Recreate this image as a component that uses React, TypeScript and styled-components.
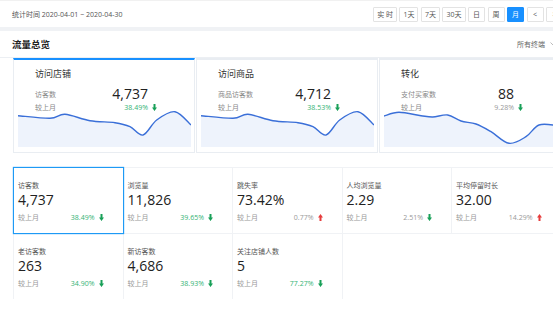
import React from 'react'
import styled, { createGlobalStyle } from 'styled-components'

const GlobalStyle = createGlobalStyle`
    html, body {
        margin: 0;
        padding: 0;
        background: #fff;
        overflow: hidden;
    }
    body {
        font-family: "Open Sans", "Noto Sans CJK SC", sans-serif;
        color: #333;
    }
`

const Page = styled.div`
    width: 574px;
`

const TopBar = styled.div`
    height: 27px;
    box-sizing: border-box;
    display: flex;
    align-items: center;
    justify-content: space-between;
    padding: 0 11px 0 12px;
    border-top: 1px solid #f1f1f1;
`

const DateText = styled.span`
    font-size: 7px;
    color: #555;
`

const BtnGroup = styled.div`
    display: flex;
    gap: 2.5px;
`

const RangeBtn = styled.div<{ $active?: boolean }>`
    height: 15px;
    min-width: 17px;
    box-sizing: border-box;
    padding: 0 3px;
    display: flex;
    align-items: center;
    justify-content: center;
    font-size: 7px;
    border: 1px solid ${(p) => (p.$active ? '#1890ff' : '#e3e3e3')};
    background: ${(p) => (p.$active ? '#1890ff' : '#fff')};
    color: ${(p) => (p.$active ? '#fff' : '#555')};
    border-radius: 1px;
`

const Band = styled.div`
    height: 4px;
    background: #f0f2f5;
`

const SectionHead = styled.div`
    height: 27px;
    box-sizing: border-box;
    display: flex;
    align-items: center;
    justify-content: space-between;
    padding: 0 18px 0 12px;
    border-bottom: 1px solid #eceff3;
`

const SectionTitle = styled.span`
    font-size: 9.5px;
    font-weight: bold;
    color: #222;
`

const Terminal = styled.span`
    display: flex;
    align-items: center;
    gap: 5px;
    font-size: 7px;
    color: #666;
`

const CardRow = styled.div`
    display: flex;
    gap: 1px;
    padding-left: 13px;
`

const Card = styled.div<{ $active?: boolean }>`
    width: 182px;
    flex: none;
    box-sizing: border-box;
    border: 1px solid #e9edf2;
    border-top: 2px solid ${(p) => (p.$active ? '#1890ff' : '#e9edf2')};
    padding: 8px 3px 5px 4px;
`

const CardTitle = styled.div`
    padding-left: 17px;
    font-size: 9px;
    line-height: 12px;
    color: #333;
`

const StatGrid = styled.div`
    display: grid;
    grid-template-columns: 70px 43px auto;
    grid-template-rows: 14px 12px;
    align-items: center;
    margin-top: 7px;
    padding-left: 17px;
`

const StatLabel = styled.span`
    font-size: 7px;
    color: #888;
`

const BigValue = styled.span`
    font-size: 14px;
    line-height: 14px;
    color: #222;
    text-align: right;
`

const Pct = styled.span<{ $tone: string }>`
    font-size: 7px;
    color: ${(p) => p.$tone};
    text-align: right;
`

const ArrowCell = styled.span`
    display: flex;
    padding-left: 4px;
`

const Chart = styled.svg`
    display: block;
    margin-top: -3px;
    width: 173px;
    height: 37px;
`

const TileGrid = styled.div`
    display: grid;
    grid-template-columns: repeat(5, 109.5px);
    margin: 14px 0 0 13px;
`

const Tile = styled.div<{ $active?: boolean }>`
    position: relative;
    z-index: ${(p) => (p.$active ? 1 : 0)};
    margin: 0 -1px -1px 0;
    padding: 12px 19px 10px 4px;
    border: 1px solid ${(p) => (p.$active ? '#1e9af5' : '#f0f2f5')};
    box-shadow: ${(p) => (p.$active ? '0 0 1px #1e9af5' : 'none')};
`

const TileLabel = styled.div`
    font-size: 7px;
    line-height: 11px;
    color: #555;
`

const TileValue = styled.div`
    font-size: 14px;
    line-height: 18px;
    color: #222;
`

const TileFoot = styled.div`
    display: flex;
    align-items: center;
    justify-content: space-between;
    margin-top: 3px;
    line-height: 11px;
    font-size: 7px;
    color: #999;
`

const Change = styled.span`
    display: flex;
    align-items: center;
    gap: 4px;
`

const GREEN = '#35b374'
const GRAY = '#999'

type Pt = [number, number]

const smooth = (pts: Pt[]) => {
    let d = `M${pts[0][0]},${pts[0][1]}`
    for (let i = 0; i < pts.length - 1; i++) {
        const p0 = pts[i - 1] || pts[i]
        const p1 = pts[i]
        const p2 = pts[i + 1]
        const p3 = pts[i + 2] || p2
        const c1x = p1[0] + (p2[0] - p0[0]) / 6
        const c1y = p1[1] + (p2[1] - p0[1]) / 6
        const c2x = p2[0] - (p3[0] - p1[0]) / 6
        const c2y = p2[1] - (p3[1] - p1[1]) / 6
        d += ` C${c1x.toFixed(1)},${c1y.toFixed(1)} ${c2x.toFixed(1)},${c2y.toFixed(1)} ${p2[0]},${p2[1]}`
    }
    return d
}

const visitLine: Pt[] = [
    [0, 5.7], [32, 8.3], [47, 4.3], [72, 10.7], [97, 12.7], [112, 16.7],
    [125, 25], [138.7, 10], [157, 1.7], [173, 15],
]

const convLine: Pt[] = [
    [0, 6], [15, 2.3], [37, 5.7], [48.7, 7], [63.7, 5], [77, 11], [92, 14],
    [107, 21.7], [125, 33.3], [142, 26.7], [155, 15], [173, 15.5],
]

const Arrow = ({ up }: { up?: boolean }) => (
    <svg width="5" height="7" viewBox="0 0 5 7">
        {up ? (
            <path d="M2.5 0L5 3.5H3.5V7h-2V3.5H0z" fill="#e63c3c" />
        ) : (
            <path d="M1.5 0h2v3.5H5L2.5 7 0 3.5h1.5z" fill="#18a058" />
        )}
    </svg>
)

const LineChart = ({ points }: { points: Pt[] }) => {
    const line = smooth(points)
    return (
        <Chart viewBox="0 0 173 37" preserveAspectRatio="none">
            <path d={`${line} L173,37 L0,37 Z`} fill="#eef3fc" />
            <path d={line} fill="none" stroke="#3a6fd8" strokeWidth="1.4" />
        </Chart>
    )
}

const cards = [
    { title: '访问店铺', label: '访客数', value: '4,737', pct: '38.49%', tone: GREEN, points: visitLine, active: true },
    { title: '访问商品', label: '商品访客数', value: '4,712', pct: '38.53%', tone: GREEN, points: visitLine },
    { title: '转化', label: '支付买家数', value: '88', pct: '9.28%', tone: GRAY, points: convLine },
]

const tiles = [
    { label: '访客数', value: '4,737', pct: '38.49%', tone: GREEN, active: true },
    { label: '浏览量', value: '11,826', pct: '39.65%', tone: GREEN },
    { label: '跳失率', value: '73.42%', pct: '0.77%', tone: GRAY, up: true },
    { label: '人均浏览量', value: '2.29', pct: '2.51%', tone: GRAY },
    { label: '平均停留时长', value: '32.00', pct: '14.29%', tone: GRAY, up: true },
    { label: '老访客数', value: '263', pct: '34.90%', tone: GREEN },
    { label: '新访客数', value: '4,686', pct: '38.93%', tone: GREEN },
    { label: '关注店铺人数', value: '5', pct: '77.27%', tone: GREEN },
]

const ranges = ['实 时', '1天', '7天', '30天', '日', '周', '月', '<', '>']

const App = () => {
    return (
        <Page>
            <GlobalStyle />
            <TopBar>
                <DateText>统计时间 2020-04-01 ~ 2020-04-30</DateText>
                <BtnGroup>
                    {ranges.map((r) => (
                        <RangeBtn key={r} $active={r === '月'}>
                            {r}
                        </RangeBtn>
                    ))}
                </BtnGroup>
            </TopBar>
            <Band />
            <SectionHead>
                <SectionTitle>流量总览</SectionTitle>
                <Terminal>
                    所有终端
                    <svg width="6" height="4" viewBox="0 0 6 4">
                        <path d="M0.5 0.5L3 3 5.5 0.5" fill="none" stroke="#aaa" strokeWidth="0.8" />
                    </svg>
                </Terminal>
            </SectionHead>
            <CardRow>
                {cards.map((c) => (
                    <Card key={c.title} $active={c.active}>
                        <CardTitle>{c.title}</CardTitle>
                        <StatGrid>
                            <StatLabel>{c.label}</StatLabel>
                            <BigValue>{c.value}</BigValue>
                            <span />
                            <StatLabel>较上月</StatLabel>
                            <Pct $tone={c.tone}>{c.pct}</Pct>
                            <ArrowCell>
                                <Arrow />
                            </ArrowCell>
                        </StatGrid>
                        <LineChart points={c.points} />
                    </Card>
                ))}
            </CardRow>
            <TileGrid>
                {tiles.map((t) => (
                    <Tile key={t.label} $active={t.active}>
                        <TileLabel>{t.label}</TileLabel>
                        <TileValue>{t.value}</TileValue>
                        <TileFoot>
                            <span>较上月</span>
                            <Change style={{ color: t.tone }}>
                                {t.pct}
                                <Arrow up={t.up} />
                            </Change>
                        </TileFoot>
                    </Tile>
                ))}
            </TileGrid>
        </Page>
    )
}

export default App
